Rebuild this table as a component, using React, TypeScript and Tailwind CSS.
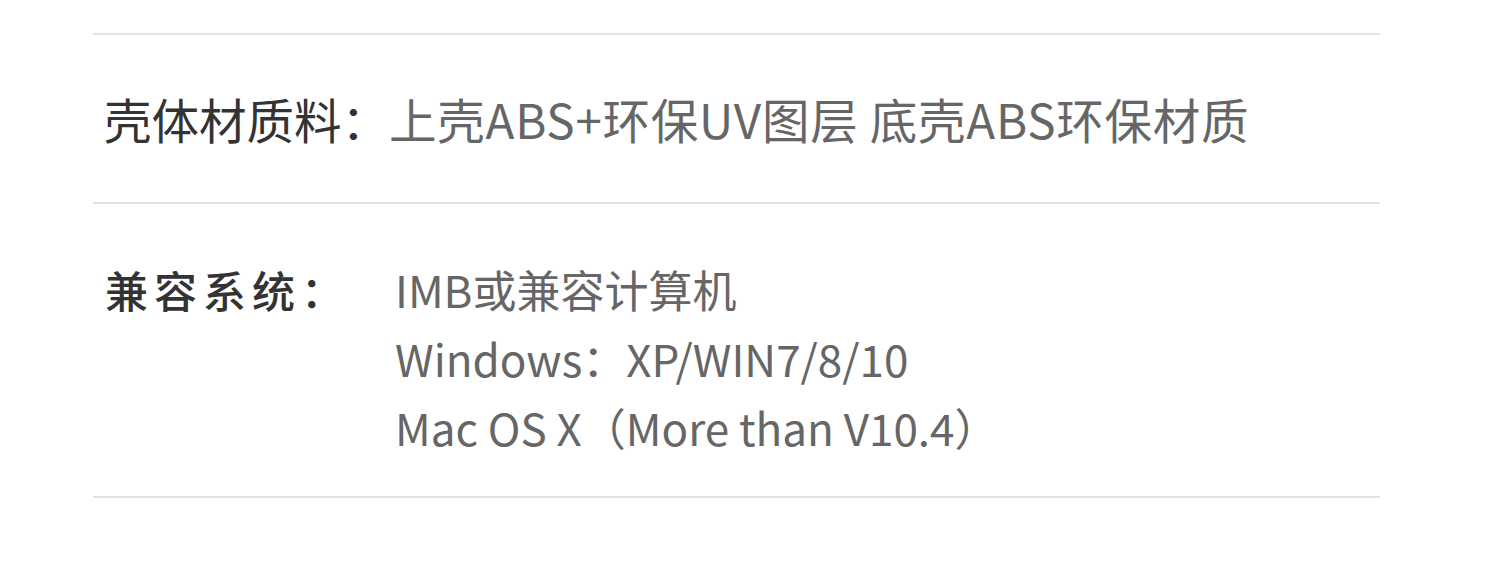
const font = { fontFamily: '"Noto Sans CJK SC", "Noto Sans", sans-serif' }

export default function App() {
  return (
    <div className="min-h-screen bg-white" style={font}>
      <div className="ml-[93px] w-[1287px] pt-[33px]">
        <div className="border-y-2 border-[#e2e2e2] h-[171px] flex items-center pl-[11px]">
          <p className="text-[47.5px] leading-none whitespace-nowrap">
            <span className="text-[#333333]">壳体材质料：</span>
            <span className="text-[#666666] tracking-[0.75px]">上壳ABS+环保UV图层 底壳ABS环保材质</span>
          </p>
        </div>
        <div className="border-b-2 border-[#e2e2e2] h-[294px] flex items-center pl-[12px] pt-[16px]">
          <div className="flex items-start">
            <div className="w-[290px] text-[43px] leading-[69px] font-medium tracking-[6px] text-[#333333]">兼容系统：</div>
            <div className="text-[44px] leading-[69px] text-[#666666]">
              <div>IMB或兼容计算机</div>
              <div>Windows：XP/WIN7/8/10</div>
              <div>Mac OS X（More than V10.4）</div>
            </div>
          </div>
        </div>
      </div>
    </div>
  )
}
